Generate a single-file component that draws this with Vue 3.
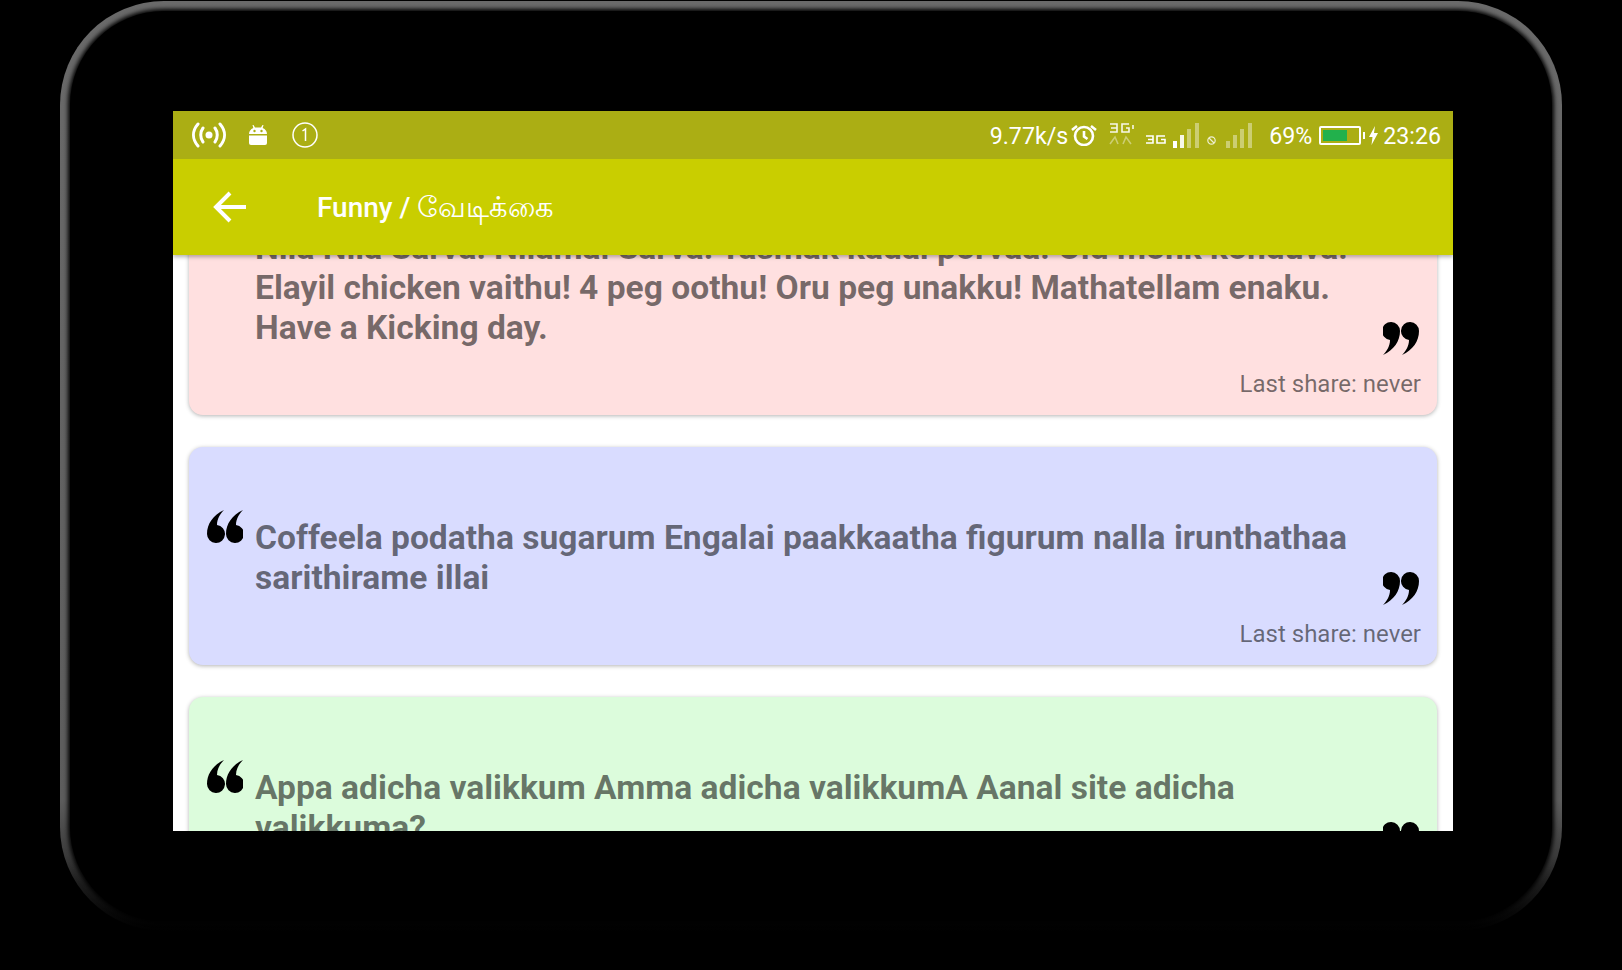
<script setup>
const cards = [
  { text: 'Nila Nila Sarva! Nilamai Sarva! Tasmak kadai porvaa! Old monk konduva! Elayil chicken vaithu! 4 peg oothu! Oru peg unakku! Mathatellam enaku. Have a Kicking day.', tone: 'pink' },
  { text: 'Coffeela podatha sugarum Engalai paakkaatha figurum nalla irunthathaa sarithirame illai', tone: 'blue' },
  { text: 'Appa adicha valikkum Amma adicha valikkumA Aanal site adicha valikkuma?', tone: 'green' },
];
</script>

<template>
  <div class="page">
    <div class="frame">
      <div class="bezel">
        <div class="screen">
          <div class="status">
            <div class="status-left">
              <svg width="34" height="26" viewBox="0 0 34 26" fill="none" stroke="#fff" stroke-width="3" stroke-linecap="round">
                <circle cx="17" cy="13" r="3.5" fill="#fff" stroke="none" />
                <path d="M11 6c-3 4-3 10 0 14M23 6c3 4 3 10 0 14M6 2C0 9 0 17 6 24M28 2c6 7 6 15 0 22" />
              </svg>
              <svg width="18" height="20" viewBox="0 0 18 20" fill="#fff">
                <path d="M3.500 0l1 0 1.500 2.500h6L13.500 0h1l-.8 3A8 7 0 0 1 18 9H0a8 7 0 0 1 4.300-6z" />
                <path d="M0 10.500h18V18a2 2 0 0 1-2 2H2a2 2 0 0 1-2-2z" />
                <circle cx="5.500" cy="6" r="1.200" fill="#abae14" />
                <circle cx="12.500" cy="6" r="1.200" fill="#abae14" />
              </svg>
              <svg width="26" height="26" viewBox="0 0 26 26" fill="none" stroke="#fff" stroke-width="1.5">
                <circle cx="13" cy="13" r="12" />
                <path d="M10.500 9l3-2v12" />
              </svg>
            </div>
            <div class="status-right">
              <span class="speed">9.77k/s</span>
              <svg class="alarm" width="26" height="22" viewBox="0 0 26 22" fill="none" stroke="#fff" stroke-width="2.600">
                <circle cx="13" cy="12" r="9" />
                <path d="M13 7v5.500l3.500 2.500M1 6l5-4M25 6l-5-4" />
              </svg>
              <svg class="net" width="25" height="24" viewBox="0 0 25 24" fill="none" stroke="#fff" stroke-width="1.600">
                <path d="M1 1h7v4H2M8 5v4H1M20 1h-7v8h7V5h-3M24 2v4" opacity=".9" />
                <path d="M1 21l5-7 3 7M14 21l3-7 5 7" opacity=".4" />
              </svg>
              <svg class="small" width="21" height="9" viewBox="0 0 21 9" fill="none" stroke="#fff" stroke-width="1.600">
                <path d="M1 1h7v3.500H3M8 4.500V8H1M20 1h-8v7h8V4.500h-4" />
              </svg>
              <svg class="bars" width="26" height="25" viewBox="0 0 26 25">
                <rect x="0" y="18" width="4" height="7" fill="#fff" />
                <rect x="7" y="12" width="4" height="13" fill="#fff" opacity=".9" />
                <rect x="14" y="6" width="4" height="19" fill="#fff" opacity=".4" />
                <rect x="22" y="0" width="4" height="25" fill="#fff" opacity=".4" />
              </svg>
              <svg class="nosim" width="9" height="9" viewBox="0 0 9 9" fill="none" stroke="#fff" stroke-width="1.200" opacity=".8">
                <circle cx="4.500" cy="4.500" r="3.700" />
                <path d="M2 2l5 5" />
              </svg>
              <svg class="bars bars2" width="26" height="25" viewBox="0 0 26 25" fill="#fff" opacity=".4">
                <rect x="0" y="18" width="4" height="7" />
                <rect x="7" y="12" width="4" height="13" />
                <rect x="14" y="6" width="4" height="19" />
                <rect x="22" y="0" width="4" height="25" />
              </svg>
              <span class="percent">69%</span>
              <div class="battery"><div class="battery-fill"></div></div>
              <div class="battery-tip"></div>
              <svg class="bolt" width="9" height="19" viewBox="0 0 9 19" fill="#fff">
                <path d="M6 0L0 11h3.500L2.500 19 9 7H5z" />
              </svg>
              <span class="time">23:26</span>
            </div>
          </div>

          <div class="appbar">
            <svg class="back" width="34" height="32" viewBox="0 0 34 32" fill="none" stroke="#fff" stroke-width="4">
              <path d="M33 16H3M17 2L3 16l14 14" />
            </svg>
            <span class="title"><b>Funny /</b> <i>வேடிக்கை</i></span>
          </div>

          <div class="list">
            <div v-for="card in cards" :key="card.tone" class="card" :class="card.tone">
              <div class="quote-row">
                <svg class="mark open" width="36" height="34" viewBox="0 0 36 34">
                  <path d="M17 0C6 5 0 14 0 24a9 9 0 1 0 10-9C10 9 13 4 17 0zM36 0C25 5 19 14 19 24a9 9 0 1 0 10-9C29 9 32 4 36 0z" />
                </svg>
                <p class="text">{{ card.text }}</p>
                <svg class="mark close" width="36" height="34" viewBox="0 0 36 34">
                  <path transform="rotate(180 18 17)" d="M17 0C6 5 0 14 0 24a9 9 0 1 0 10-9C10 9 13 4 17 0zM36 0C25 5 19 14 19 24a9 9 0 1 0 10-9C29 9 32 4 36 0z" />
                </svg>
              </div>
              <div class="share">Last share: never</div>
            </div>
          </div>
        </div>
      </div>
    </div>
  </div>
</template>

<style scoped>
.page {
  width: 1622px;
  height: 970px;
  background: #000;
  overflow: hidden;
  padding: 1px 60px 0;
  box-sizing: border-box;
  font-family: Roboto, "Noto Sans", sans-serif;
}

.frame {
  height: 930px;
  padding: 10px;
  box-sizing: border-box;
  border-radius: 104px;
  background: linear-gradient(#6a6a6a, #5c5c5c 86%, #3a3a3a 92%, #1c1c1c 95%, #080808 98%, #000 100%);
}

.bezel {
  height: 100%;
  border-radius: 94px;
  background: #000;
  box-shadow: 0 0 4px 2px #000;
  padding: 100px 99px 0 103px;
  box-sizing: border-box;
}

.screen {
  width: 1280px;
  height: 720px;
  display: flex;
  flex-direction: column;
  overflow: hidden;
  background: #fff;
}

.status {
  height: 48px;
  flex: none;
  position: relative;
  z-index: 3;
  background: #abae14;
  color: #fff;
  display: flex;
  align-items: center;
  justify-content: space-between;
  padding: 0 12px 0 19px;
  font-size: 23.2px;
}

.status-left {
  display: flex;
  align-items: center;
  gap: 23px;
}

.status-left svg:nth-child(3) {
  margin-left: 2px;
}

.status-right {
  display: flex;
  align-items: center;
}

.status-right span {
  padding-top: 2px;
}

.alarm {
  margin-left: 3px;
}

.net {
  margin-left: 12px;
}

.small {
  margin: 8px 0 0 11px;
}

.bars {
  margin-left: 7px;
}

.nosim {
  margin: 10px 0 0 8px;
}

.bars2 {
  margin-left: 10px;
}

.percent {
  margin-left: 17px;
}

.battery {
  width: 42px;
  height: 19px;
  margin-left: 7px;
  border: 2px solid #fff;
  border-radius: 2px;
  box-sizing: border-box;
  padding: 2px;
}

.battery-fill {
  width: 24px;
  height: 100%;
  background: #22b14c;
}

.battery-tip {
  width: 2px;
  height: 7px;
  margin-left: 2px;
  background: #fff;
}

.bolt {
  margin-left: 4px;
}

.time {
  margin-left: 5px;
}

.appbar {
  height: 96px;
  flex: none;
  position: relative;
  z-index: 2;
  background: #c9ce00;
  color: #fff;
  display: flex;
  align-items: center;
  padding-left: 40px;
  box-shadow: 0 2px 4px rgba(0, 0, 0, 0.3);
}

.back {
  margin-right: 70px;
}

.title {
  font-size: 28px;
  padding-top: 4px;
}

.title b {
  font-weight: 500;
}

.title i {
  font-style: normal;
  font-size: 29px;
}

.list {
  flex: 1;
  min-height: 0;
  padding: 0 16px;
  display: flex;
  flex-direction: column;
  gap: 32px;
}

.card {
  flex: none;
  height: 218px;
  box-sizing: border-box;
  padding: 71px 16px 0 16px;
  border-radius: 14px;
  box-shadow: 0 1px 4px rgba(0, 0, 0, 0.3);
}

.card:first-child {
  height: 258px;
  margin-top: -98px;
}

.pink {
  background: #ffe0e0;
}

.blue {
  background: #d9dcff;
}

.green {
  background: #dcfcdc;
}

.quote-row {
  display: flex;
  align-items: flex-start;
}

.mark {
  flex: none;
  fill: #000;
}

.open {
  margin: -8px 12px 0 2px;
}

.close {
  align-self: flex-end;
  margin: 0 2px -7px 18px;
}

.text {
  flex: 1;
  margin: 0;
  font-size: 33.6px;
  line-height: 40px;
  font-weight: 700;
  color: rgba(0, 0, 0, 0.54);
}

.share {
  margin-top: 22px;
  text-align: right;
  font-size: 24px;
  line-height: 28px;
  color: rgba(0, 0, 0, 0.54);
}
</style>
